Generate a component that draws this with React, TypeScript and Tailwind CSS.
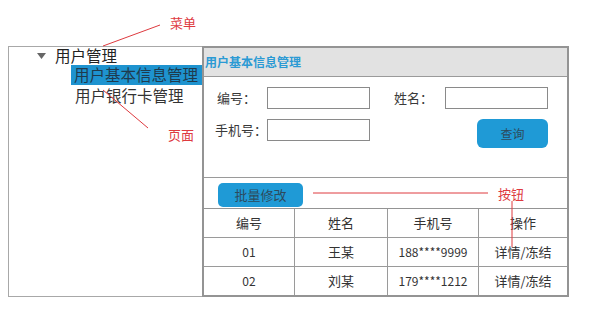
const font = { fontFamily: '"Noto Sans CJK SC", "Noto Sans", sans-serif' };

function Field({ label, labelW }: { label: string; labelW: string }) {
  return (
    <div className="flex items-center">
      <span className={`${labelW} text-[13px] text-[#3a3a3a]`}>{label}</span>
      <div className="w-[103px] h-[22px] border border-[#8a8a8a] bg-white" />
    </div>
  );
}

export default function App() {
  const rows = [
    ["01", "王某", "188****9999", "详情/冻结"],
    ["02", "刘某", "179****1212", "详情/冻结"],
  ];

  return (
    <div className="relative w-[600px] h-[324px] bg-white overflow-hidden" style={font}>
      <div className="pt-[46px] pl-[8px] flex">
        {/* left menu */}
        <div className="w-[194px] h-[251px] border border-r-0 border-[#a8a8a8]">
          <div className="flex items-center h-[18px] pl-[28px]">
            <svg width="9" height="6" viewBox="0 0 9 6" className="mr-[9px]">
              <polygon points="0,0 9,0 4.5,6" fill="#666" />
            </svg>
            <span className="text-[15.5px] leading-none text-[#222]">用户管理</span>
          </div>
          <div className="ml-[62px] h-[20px] bg-[#1e93cf] pl-[3px] flex items-center">
            <span className="text-[15.5px] leading-none text-[#1f3a4d]">用户基本信息管理</span>
          </div>
          <div className="ml-[66px] mt-[1px] h-[20px] flex items-center">
            <span className="text-[15.5px] leading-none text-[#333]">用户银行卡管理</span>
          </div>
        </div>

        {/* right page */}
        <div className="w-[367px] h-[251px] border-2 border-[#949494] flex flex-col">
          <div className="shrink-0 h-[29px] bg-[#e2e2e2] border-b border-[#9a9a9a] flex items-center pl-[1px]">
            <span className="text-[12px] font-bold text-[#2b9ad4]">用户基本信息管理</span>
          </div>
          <div className="shrink-0 h-[101px] border-b border-[#9a9a9a] pt-[10px]">
            <div className="flex items-center pl-[13px]">
              <Field label="编号：" labelW="w-[50px]" />
              <div className="ml-[24px]">
                <Field label="姓名：" labelW="w-[51px]" />
              </div>
            </div>
            <div className="flex items-start pl-[11px] mt-[10px]">
              <Field label="手机号：" labelW="w-[52px]" />
              <button className="ml-[107px] w-[71px] h-[29px] rounded-[6px] bg-[#1f9ad6] text-[12px] text-[#2d4a5c]">
                查询
              </button>
            </div>
          </div>
          <div className="shrink-0 h-[31px] border-b border-[#949494] pl-[14px] pt-[3px]">
            <button className="w-[85px] h-[24px] rounded-[5px] bg-[#1f9ad6] text-[13px] text-[#2d4a5c]">
              批量修改
            </button>
          </div>
          <div className="grid grid-cols-[91px_93px_91px_1fr] grid-rows-[29px_29px_1fr] text-[13px] text-[#333] flex-1">
            {["编号", "姓名", "手机号", "操作"].map((h, i) => (
              <div
                key={h}
                className={`flex items-center justify-center border-b border-[#9a9a9a] ${i < 3 ? "border-r" : ""}`}
              >
                {h}
              </div>
            ))}
            {rows.map((r, ri) =>
              r.map((c, i) => (
                <div
                  key={`${ri}-${i}`}
                  className={`flex items-center justify-center border-[#9a9a9a] ${ri === 0 ? "border-b" : ""} ${i < 3 ? "border-r" : ""} ${i === 0 || i === 2 ? "text-[12px]" : ""}`}
                >
                  {c}
                </div>
              )),
            )}
          </div>
        </div>
      </div>

      {/* annotations */}
      <span className="absolute left-[170px] top-[13px] text-[13px] text-[#de3a3f]">菜单</span>
      <span className="absolute left-[168px] top-[125px] text-[13px] text-[#de3a3f]">页面</span>
      <span className="absolute left-[498px] top-[184px] text-[13px] text-[#de3a3f]">按钮</span>
      <svg className="absolute left-0 top-0 pointer-events-none" width="600" height="324">
        <line x1="103" y1="46" x2="160" y2="25" stroke="#de3a3f" strokeWidth="1" />
        <line x1="148" y1="128" x2="103" y2="90" stroke="#de3a3f" strokeWidth="1" />
        <line x1="313" y1="193" x2="488" y2="193" stroke="#de3a3f" strokeWidth="1" />
        <line x1="512" y1="201" x2="512" y2="247" stroke="#de3a3f" strokeWidth="1" />
      </svg>
    </div>
  );
}
